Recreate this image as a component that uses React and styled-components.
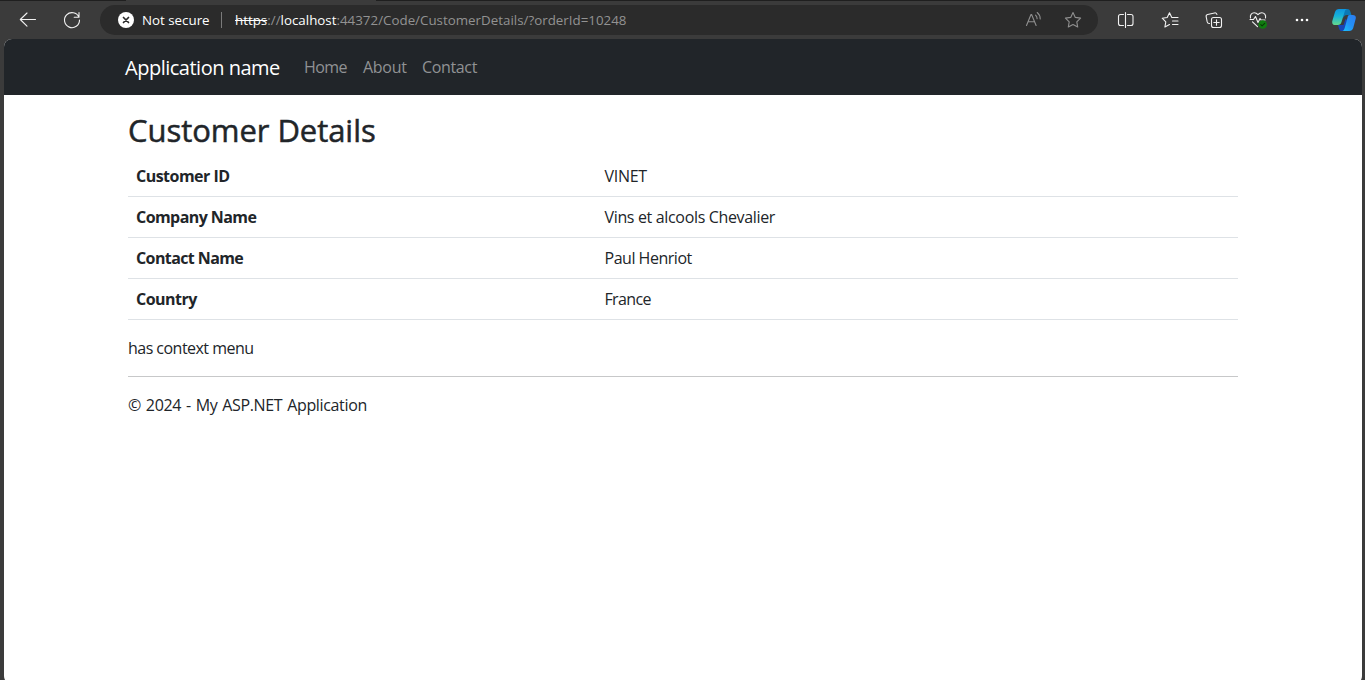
import React from "react";
import styled, { createGlobalStyle } from "styled-components";

const GlobalStyle = createGlobalStyle`
  *, *::before, *::after { box-sizing: border-box; }
  html, body { margin: 0; height: 100%; overflow: hidden; background: #3b3b3b; }
  body { font-family: "Open Sans", "Noto Sans", sans-serif; font-size: 16px; line-height: 24px; color: #212529; }
`;

const Window = styled.div`
  height: 680px;
  width: 1365px;
  overflow: hidden;
  display: flex;
  flex-direction: column;
  background: #3b3b3b;
`;

const TabEdge = styled.div`
  flex: none;
  height: 1px;
  background: linear-gradient(90deg, #1f1f1f 126px, #3b3b3b 126px, #3b3b3b 376px, #1f1f1f 376px);
`;

const Toolbar = styled.div`
  flex: none;
  height: 38px;
  display: flex;
  align-items: center;
  padding-left: 16px;
`;

const Icon = styled.svg`
  flex: none;
  display: block;
  width: 24px;
  height: 24px;
  fill: none;
  stroke: ${(p) => (p.$dim ? "#8f8f8f" : "#f2f2f2")};
  stroke-width: 1.1;
  stroke-linecap: round;
  stroke-linejoin: round;
`;

const Controls = styled.div`
  display: flex;
  gap: 20px;
  width: 84px;
`;

const AddressBar = styled.div`
  width: 998px;
  height: 30px;
  border-radius: 15px;
  background: #2b2b2b;
  display: flex;
  align-items: center;
  padding: 0 13px 0 14px;
  font-size: 13.33px;
  line-height: 20px;
  white-space: nowrap;
`;

const Security = styled.span`
  color: #fff;
  width: 79px;
  margin-left: 4px;
`;

const Divider = styled.span`
  width: 1px;
  height: 16px;
  background: #7a7a7a;
  margin-right: 13px;
`;

const Url = styled.span`
  flex: 1;
  color: #929292;
  letter-spacing: 0.01px;
`;

const Host = styled.span`
  color: #fff;
`;

const Scheme = styled(Host)`
  text-decoration: line-through;
`;

const AddressActions = styled.div`
  display: flex;
  gap: 15px;
`;

const Actions = styled.div`
  display: flex;
  gap: 20px;
  margin-left: 16px;
`;

const CopilotSlot = styled.div`
  margin-left: 18px;
`;

const Page = styled.main`
  flex: none;
  height: 645px;
  width: 1358px;
  margin-left: 4px;
  border-radius: 8px;
  overflow: hidden;
  background: #fff;
`;

const Navbar = styled.nav`
  height: 56px;
  background: #212529;
  display: flex;
  align-items: center;
  padding-left: 121px;
`;

const Text = styled.span`
  letter-spacing: ${(p) => p.$track || 0}px;
  word-spacing: ${(p) => p.$words || 0}px;
  white-space: nowrap;
`;

const Brand = styled.a`
  width: 179px;
  padding-top: 2px;
  color: #fff;
  font-size: 20px;
  line-height: 30px;
`;

const NavItem = styled.a`
  width: ${(p) => p.$width}px;
  color: #909294;
`;

const Content = styled.div`
  width: 1110px;
  margin: 16px 0 0 124px;
`;

const Title = styled.h1`
  margin: 0 0 7px;
  font-size: 31px;
  line-height: 38px;
  font-weight: 500;
  -webkit-text-stroke: 0.5px #212529;
`;

const Row = styled.div`
  display: grid;
  grid-template-columns: 468.5px 1fr;
  height: 41px;
  padding: 8px;
  border-bottom: 1px solid #dee2e6;
`;

const Label = styled.span`
  font-weight: 700;
`;

const Note = styled.p`
  margin: 16px 0;
`;

const Rule = styled.hr`
  margin: 0 0 16px;
  border: 0;
  border-top: 1px solid #c7c8c9;
`;

const Footer = styled.footer`
  line-height: 24px;
`;

const nav = [
  { label: "Home", width: 59, track: -0.6 },
  { label: "About", width: 59, track: -0.3 },
  { label: "Contact", width: 70, track: -0.35 },
];

const rows = [
  { label: "Customer ID", value: "VINET", lt: -0.52, vt: -0.3 },
  { label: "Company Name", value: "Vins et alcools Chevalier", lt: -0.57, vt: -0.34 },
  { label: "Contact Name", value: "Paul Henriot", lt: -0.6, vt: -0.48 },
  { label: "Country", value: "France", lt: -0.52, vt: -0.65 },
];

const starPath = "M12 4.6l2.3 4.8 5.3.7-3.8 3.7.9 5.2-4.7-2.5-4.7 2.5.9-5.2-3.8-3.7 5.3-.7z";

function Copilot() {
  return (
    <Icon viewBox="0 0 24 24">
      <defs>
        <linearGradient id="left" x1="0" y1="0" x2="0" y2="1">
          <stop offset="0" stopColor="#0d94e0" />
          <stop offset=".45" stopColor="#17b3d8" />
          <stop offset="1" stopColor="#65d98c" />
        </linearGradient>
        <linearGradient id="right" x1="1" y1="0" x2="0" y2="1">
          <stop offset="0" stopColor="#2c7cf0" />
          <stop offset=".5" stopColor="#2390f5" />
          <stop offset="1" stopColor="#19c4fb" />
        </linearGradient>
      </defs>
      <g stroke="none">
        <path fill="#0a78b5" d="M10 1h5.500c1.700 0 2.300 1 2.800 2.500L19.500 7H15c-2.300 0-3 1.200-3.500 3z" />
        <path fill="#1746b8" d="M6 17h5.500l2-6 2 1-3 11H10c-1.800 0-2.500-1-3-2.600z" />
        <path fill="url(#left)" d="M7 1h8c-1.400.3-2 1.600-2.500 3.200L9.500 14c-.7 2.200-1.700 3-3.700 3H3.200C.8 17-.2 15.400.3 13L3 4C3.700 2 5 1 7 1z" />
        <path fill="url(#right)" d="M17.800 7h3c2.400 0 3.500 1.500 2.900 3.800L21.200 20c-.6 2-2 3-4 3h-7c1.400-.3 2-1.400 2.500-3l2.600-9.600C15.900 8.200 16 7 17.800 7z" />
      </g>
    </Icon>
  );
}

export default function App() {
  return (
    <>
      <GlobalStyle />
      <Window>
        <TabEdge />
        <Toolbar>
          <Controls>
            <Icon viewBox="0 0 24 24"><path d="M11 5L4.300 11.500 11 18.200M4.500 11.500H19.500" /></Icon>
            <Icon viewBox="0 0 24 24"><path d="M18.900 9.200A7.500 7.500 0 1 0 19.500 12M19 4.500V9.300H14.200" /></Icon>
          </Controls>
          <AddressBar>
            <Icon viewBox="0 0 24 24">
              <circle cx="12" cy="12" r="8" fill="#fff" stroke="none" />
              <path d="M9.500 9.500l5 5M14.500 9.500l-5 5" stroke="#2b2b2b" strokeWidth="1.7" />
            </Icon>
            <Security>Not secure</Security>
            <Divider />
            <Url>
              <Scheme>https</Scheme>://<Host>localhost</Host>:44372/Code/CustomerDetails/?orderId=10248
            </Url>
            <AddressActions>
              <Icon viewBox="0 0 24 24" $dim>
                <path d="M4.500 17.500L9 6.500h.6l4.500 11M6.200 13.800h6.300M13.600 7.200c1 .8 1.500 2 1.500 3.600M15.200 4.500c2 1.600 3 3.700 3 6.500" />
              </Icon>
              <Icon viewBox="0 0 24 24" $dim><path d={starPath} /></Icon>
            </AddressActions>
          </AddressBar>
          <Actions>
            <Icon viewBox="0 0 24 24">
              <path d="M9.500 6.500H6.500a2 2 0 0 0-2 2v7a2 2 0 0 0 2 2h3M13.500 6.500h3.500a2 2 0 0 1 2 2v7a2 2 0 0 1-2 2h-3.500M11.500 4.500v15" />
            </Icon>
            <Icon viewBox="0 0 24 24">
              <path d="M18 9.500h-4.200L11.500 4.700 9.200 9.500l-5 .7 3.600 3.600-.9 5.200 4.600-2.500M14.500 9.500H20M14.500 13H20M14.500 16.500H20" />
            </Icon>
            <Icon viewBox="0 0 24 24">
              <rect x="9.500" y="9.500" width="10" height="10" rx="2" />
              <path d="M14.500 11.800v5.400M11.800 14.500h5.400M7.500 15.500c-1.300.1-2-.4-2.300-1.600L4.200 8.800c-.3-1.300.2-2 1.400-2.300L12.500 5c1.300-.3 2.100.2 2.400 1.500" />
            </Icon>
            <Icon viewBox="0 0 24 24">
              <path d="M4.500 10C3.700 6.500 6 4.700 8.200 4.700c1.700 0 2.800.8 3.800 2 1-1.200 2.100-2 3.800-2 2.200 0 4.500 1.800 3.700 5.300M4 11.500h3.500l2-3 2.500 6 2-4 1 1.500h4M6.500 13.800l5 4.800" />
              <circle cx="16.700" cy="16.500" r="4.300" fill="#107c10" stroke="none" />
              <path d="M14.800 16.600l1.300 1.300 2.600-2.600" stroke="#073b07" />
            </Icon>
            <Icon viewBox="0 0 24 24">
              <g fill="#fff" stroke="none"><circle cx="7" cy="12" r="1.300" /><circle cx="12" cy="12" r="1.300" /><circle cx="17" cy="12" r="1.300" /></g>
            </Icon>
          </Actions>
          <CopilotSlot><Copilot /></CopilotSlot>
        </Toolbar>
        <Page>
          <Navbar>
            <Brand><Text $track={-0.49}>Application name</Text></Brand>
            {nav.map((n) => (
              <NavItem key={n.label} $width={n.width}><Text $track={n.track}>{n.label}</Text></NavItem>
            ))}
          </Navbar>
          <Content>
            <Title><Text $track={-0.05}>Customer Details</Text></Title>
            {rows.map((r) => (
              <Row key={r.label}>
                <Label><Text $track={r.lt}>{r.label}</Text></Label>
                <Text $track={r.vt}>{r.value}</Text>
              </Row>
            ))}
            <Note><Text $track={-0.53}>has context menu</Text></Note>
            <Rule />
            <Footer><Text $track={-0.35} $words={1.1}>© 2024 - My ASP.NET Application</Text></Footer>
          </Content>
        </Page>
      </Window>
    </>
  );
}
